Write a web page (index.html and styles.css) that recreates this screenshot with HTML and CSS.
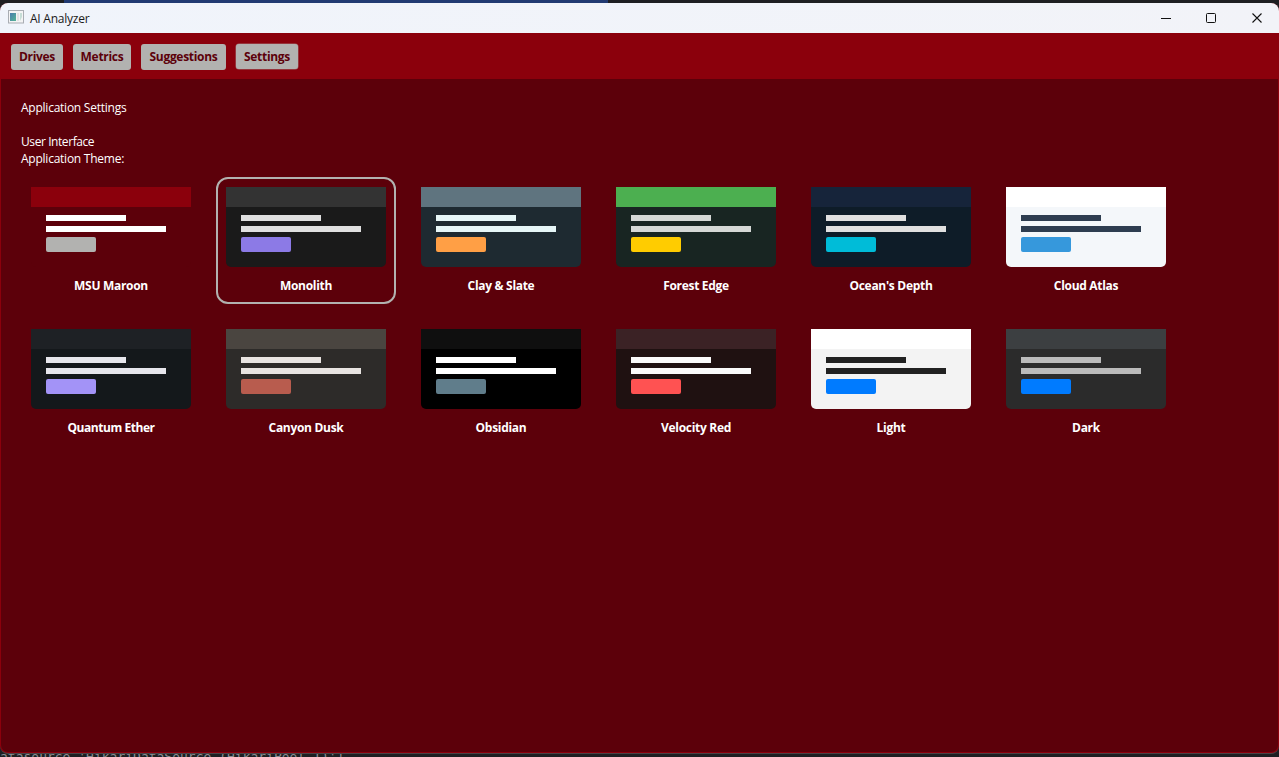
FILE: index.html
```
<!DOCTYPE html>
<html lang="en">
<head>
<meta charset="utf-8">
<title>AI Analyzer</title>
<link rel="stylesheet" href="styles.css">
</head>
<body>
<div class="desktop-top"></div>
<main class="window">
  <header class="titlebar">
    <svg class="app-icon" width="16" height="14" viewBox="0 0 16 14"><defs><linearGradient id="g" x2="1" y2="1"><stop stop-color="#4b7cae"/><stop offset="1" stop-color="#56b596"/></linearGradient></defs><rect x=".5" y=".5" width="15" height="12.5" fill="#f4f4f5" stroke="#a9adb3"/><rect x="2" y="3" width="6" height="8" fill="url(#g)"/><path d="M9 3h2v8H9z" fill="#e2e2e4"/><path d="M12 3h2v4l-2 4z" fill="#c6ddd6"/></svg>
    <span class="title">AI Analyzer</span>
    <svg class="controls" width="103" height="12" viewBox="0 0 103 12" fill="none" stroke="#111"><path d="M1 6.5h10"/><rect x="46.500" y="1.500" width="9" height="9" rx="1"/><path d="M92.500 1.500l9 9m0-9l-9 9" stroke-width="1.100"/></svg>
  </header>
  <nav class="toolbar">
    <button class="nav drives">Drives</button>
    <button class="nav metrics">Metrics</button>
    <button class="nav suggestions">Suggestions</button>
    <button class="nav settings">Settings</button>
  </nav>
  <section class="content">
    <div class="heading"><span>Application Settings</span></div>
    <div class="label ui"><span>User Interface</span></div>
    <div class="label"><span>Application Theme:</span></div>
    <div class="themes">
      <div class="card maroon"><div class="preview"><i class="bar"></i><i class="line short"></i><i class="line"></i><i class="chip"></i></div><span class="name">MSU Maroon</span></div>
      <div class="card monolith selected"><div class="preview"><i class="bar"></i><i class="line short"></i><i class="line"></i><i class="chip"></i></div><span class="name">Monolith</span></div>
      <div class="card clay"><div class="preview"><i class="bar"></i><i class="line short"></i><i class="line"></i><i class="chip"></i></div><span class="name">Clay &amp; Slate</span></div>
      <div class="card forest"><div class="preview"><i class="bar"></i><i class="line short"></i><i class="line"></i><i class="chip"></i></div><span class="name">Forest Edge</span></div>
      <div class="card ocean"><div class="preview"><i class="bar"></i><i class="line short"></i><i class="line"></i><i class="chip"></i></div><span class="name">Ocean's Depth</span></div>
      <div class="card cloud"><div class="preview"><i class="bar"></i><i class="line short"></i><i class="line"></i><i class="chip"></i></div><span class="name">Cloud Atlas</span></div>
      <div class="card quantum"><div class="preview"><i class="bar"></i><i class="line short"></i><i class="line"></i><i class="chip"></i></div><span class="name">Quantum Ether</span></div>
      <div class="card canyon"><div class="preview"><i class="bar"></i><i class="line short"></i><i class="line"></i><i class="chip"></i></div><span class="name">Canyon Dusk</span></div>
      <div class="card obsidian"><div class="preview"><i class="bar"></i><i class="line short"></i><i class="line"></i><i class="chip"></i></div><span class="name">Obsidian</span></div>
      <div class="card velocity"><div class="preview"><i class="bar"></i><i class="line short"></i><i class="line"></i><i class="chip"></i></div><span class="name">Velocity Red</span></div>
      <div class="card light"><div class="preview"><i class="bar"></i><i class="line short"></i><i class="line"></i><i class="chip"></i></div><span class="name">Light</span></div>
      <div class="card dark"><div class="preview"><i class="bar"></i><i class="line short"></i><i class="line"></i><i class="chip"></i></div><span class="name">Dark</span></div>
    </div>
  </section>
</main>
<div class="console">atasource 'HikariDataSource (HikariPool-1)']</div>
</body>
</html>
```
FILE: styles.css
```
* { box-sizing: border-box; }
body {
  margin: 0;
  height: 757px;
  overflow: hidden;
  display: flex;
  flex-direction: column;
  background: #1e1f22;
  font: 12px/17px "Open Sans", "Noto Sans", sans-serif;
  letter-spacing: -0.24px;
}
.desktop-top {
  height: 3px;
  flex: none;
  background: linear-gradient(90deg, #1e1f22 64px, #213a72 64px, #213a72 608px, #1e1f22 608px);
}
.window {
  height: 751px;
  flex: none;
  display: flex;
  flex-direction: column;
  overflow: hidden;
  border-radius: 8px;
  border-bottom: 1px solid #494346;
  background: #8b000c;
}
.titlebar {
  height: 30px;
  flex: none;
  display: flex;
  align-items: center;
  padding: 0 16px 0 8px;
  background: linear-gradient(90deg, #f0f4fb, #f2f3f8);
  color: #1a1a1a;
}
.app-icon { margin-bottom: 2px; }
.title { margin-left: 6px; }
.controls { margin-left: auto; margin-bottom: 1px; }
.toolbar {
  height: 46px;
  flex: none;
  display: flex;
  gap: 10px;
  padding: 11px 11px;
}
.nav {
  height: 26px;
  padding: 0;
  border: 0;
  border-radius: 3px;
  background: #b2b2b0;
  color: #5c000a;
  font: bold 12px/26px "Open Sans", "Noto Sans", sans-serif;
  letter-spacing: -0.3px;
  white-space: nowrap;
}
.drives { width: 52px; }
.metrics { width: 58px; }
.suggestions { width: 85px; }
.settings { width: 62px; height: 25px; box-shadow: 0 0 0 .5px #a1686b; }
.content {
  flex: 1;
  margin: 0 1px 1px;
  padding: 20px 20px 0;
  border-radius: 0 0 7px 7px;
  background: #5c000a;
  color: #fff;
}
.heading { margin-bottom: 17px; }
.ui { letter-spacing: -0.42px; }
.themes {
  display: grid;
  grid-template-columns: repeat(6, 180px);
  gap: 15px;
  margin: 10px 0 0;
}
.card {
  height: 127px;
  display: flex;
  flex-direction: column;
  align-items: center;
  padding: 8px;
  border: 2px solid transparent;
  border-radius: 12px;
}
.selected { border-color: #b2b2b0; }
.preview {
  width: 160px;
  height: 80px;
  flex: none;
  display: flex;
  flex-direction: column;
  border-radius: 0 0 5px 5px;
  background: var(--bg);
}
.bar { height: 20px; margin-bottom: 8px; background: var(--bar); }
.line { width: 120px; height: 6px; margin: 0 0 5px 15px; background: var(--text); }
.short { width: 80px; }
.chip { width: 50px; height: 15px; margin-left: 15px; border-radius: 2px; background: var(--accent); }
.name { margin-top: 10px; font-weight: bold; letter-spacing: -0.3px; }
.quantum .name { letter-spacing: -0.45px; }
.maroon { --bg: #5c000a; --bar: #8b000c; --text: #fff; --accent: #b2b2b0; }
.monolith { --bg: #1a1a1a; --bar: #333; --text: #e0e0e0; --accent: #8c7ae6; }
.clay { --bg: #1e2a31; --bar: #5f747f; --text: #e6f6f7; --accent: #ff9f45; }
.forest { --bg: #182522; --bar: #4caf50; --text: #d5d8d6; --accent: #fc0; }
.ocean { --bg: #0e1c28; --bar: #16243a; --text: #e0e0e0; --accent: #00bcd8; }
.cloud { --bg: #f4f7fa; --bar: #fff; --text: #2e3d50; --accent: #3698dc; }
.quantum { --bg: #14181b; --bar: #1e2125; --text: #e6e6ec; --accent: #a393f7; }
.canyon { --bg: #2d2b29; --bar: #4a4540; --text: #e8e4e1; --accent: #b85c4e; }
.obsidian { --bg: #000; --bar: #0f0f0f; --text: #fff; --accent: #607d8b; }
.velocity { --bg: #1f1111; --bar: #3b2225; --text: #fafafa; --accent: #ff5252; }
.light { --bg: #f3f3f3; --bar: #fff; --text: #212121; --accent: #007bff; }
.dark { --bg: #2b2b2b; --bar: #3c3f41; --text: #bbb; --accent: #007bff; }
.console {
  height: 3px;
  flex: none;
  overflow: hidden;
  color: #8b8d92;
  font: 13px/6px "DejaVu Sans Mono", monospace;
  letter-spacing: 0;
  white-space: pre;
}
```
